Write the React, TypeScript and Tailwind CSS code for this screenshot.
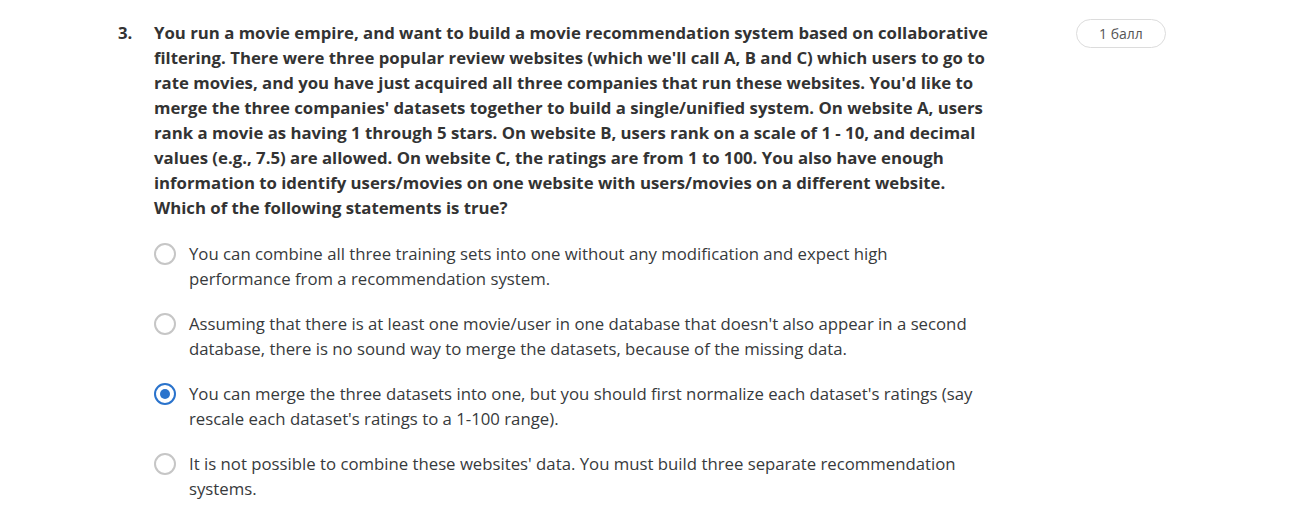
import { useState } from "react"

const QUESTION =
  "You run a movie empire, and want to build a movie recommendation system based on collaborative filtering. There were three popular review websites (which we'll call A, B and C) which users to go to rate movies, and you have just acquired all three companies that run these websites. You'd like to merge the three companies' datasets together to build a single/unified system. On website A, users rank a movie as having 1 through 5 stars. On website B, users rank on a scale of 1 - 10, and decimal values (e.g., 7.5) are allowed. On website C, the ratings are from 1 to 100. You also have enough information to identify users/movies on one website with users/movies on a different website. Which of the following statements is true?"

const OPTIONS = [
  "You can combine all three training sets into one without any modification and expect high performance from a recommendation system.",
  "Assuming that there is at least one movie/user in one database that doesn't also appear in a second database, there is no sound way to merge the datasets, because of the missing data.",
  "You can merge the three datasets into one, but you should first normalize each dataset's ratings (say rescale each dataset's ratings to a 1-100 range).",
  "It is not possible to combine these websites' data. You must build three separate recommendation systems.",
]

export default function App() {
  const [selected, setSelected] = useState(2)

  return (
    <div
      className="min-h-screen bg-white text-[#333333]"
      style={{ fontFamily: "'Open Sans', 'Noto Sans', sans-serif" }}
    >
      <div className="flex items-start pl-[118px] pt-[20px]">
        <div className="w-[36px] shrink-0 text-[16.75px] font-bold leading-[25px]">3.</div>

        <div className="w-[842px] shrink-0">
          <p className="text-[16.75px] font-bold leading-[25px]">{QUESTION}</p>

          {/* answer choices */}
          <div className="mt-[21px] flex flex-col gap-[20px] pr-[12px]">
            {OPTIONS.map((text, i) => (
              <label key={i} className="flex items-start gap-[13px] cursor-pointer">
                <input
                  type="radio"
                  name="q3"
                  className="sr-only"
                  checked={selected === i}
                  onChange={() => setSelected(i)}
                />
                <span
                  className={
                    selected === i
                      ? "mt-[2px] flex h-[22px] w-[22px] shrink-0 items-center justify-center rounded-full border-2 border-[#2a73cc]"
                      : "mt-[2px] flex h-[22px] w-[22px] shrink-0 items-center justify-center rounded-full border-2 border-[#c6c6c6]"
                  }
                >
                  {selected === i && <span className="h-[10px] w-[10px] rounded-full bg-[#2a73cc]" />}
                </span>
                <span className="text-[16.75px] leading-[25px] text-[#373a3c]">{text}</span>
              </label>
            ))}
          </div>
        </div>

        <div className="ml-[80px] mt-[-1px] flex h-[29px] w-[90px] shrink-0 items-center justify-center rounded-full border border-[#dcdcdc] text-[14px] text-[#555555]">
          1 балл
        </div>
      </div>
    </div>
  )
}
